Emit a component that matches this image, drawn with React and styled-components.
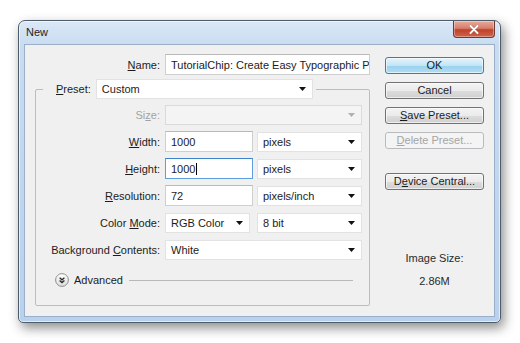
import React from 'react';
import styled, { createGlobalStyle } from 'styled-components';

const Global = createGlobalStyle`
  html, body { margin: 0; padding: 0; background: #ffffff; }
  body {
    font-family: "Liberation Sans", Arial, sans-serif;
    font-size: 11px;
    color: #1c1c1c;
  }
  * { box-sizing: border-box; }
`;

const Page = styled.div`
  width: 520px;
  height: 343px;
  padding: 20px 0 0 18px;
`;

const Window = styled.div`
  width: 483px;
  height: 303px;
  border: 1px solid #4d5b6a;
  border-radius: 7px 7px 5px 5px;
  background: linear-gradient(#dbe8f6 0px, #c9dcf0 24px, #b9d1ec 100%);
  box-shadow: 3px 5px 12px rgba(0, 0, 0, 0.45), inset 0 0 0 1px rgba(255, 255, 255, 0.6);
  display: flex;
  flex-direction: column;
  padding: 0 5px 5px 5px;
`;

const TitleBar = styled.div`
  height: 23px;
  display: flex;
  justify-content: space-between;
  align-items: flex-start;
`;

const Title = styled.div`
  padding-left: 2px;
  line-height: 23px;
  font-size: 11px;
  color: #1e1e1e;
`;

const CloseButton = styled.div`
  width: 42px;
  height: 17px;
  border: 1px solid #6b3a36;
  border-top: none;
  border-radius: 0 0 4px 4px;
  background: linear-gradient(#e9aa9c 0%, #d67f6c 45%, #c2412a 55%, #cd644a 100%);
  display: flex;
  align-items: center;
  justify-content: center;
  box-shadow: inset 0 0 0 1px rgba(255, 255, 255, 0.35);
`;

const Client = styled.div`
  flex: 1;
  background: #f0f0f0;
  border: 1px solid #9bb0c8;
  display: flex;
  padding: 9px 0 0 10px;
`;

const LeftCol = styled.div`
  width: 335px;
  display: flex;
  flex-direction: column;
`;

const NameRow = styled.div`
  display: grid;
  grid-template-columns: 125px 205px;
  column-gap: 5px;
  align-items: center;
`;

const Label = styled.div`
  text-align: right;
  white-space: nowrap;
  color: ${p => (p.$disabled ? '#a3a3a3' : '#1c1c1c')};
`;

const TextBox = styled.div`
  width: ${p => p.$w}px;
  height: 21px;
  background: #ffffff;
  border: 1px solid ${p => (p.$focus ? '#5c9ee0' : '#cfcfcf')};
  border-top-color: ${p => (p.$focus ? '#3d83cc' : '#b9b9b9')};
  padding-left: 5px;
  display: flex;
  align-items: center;
  white-space: nowrap;
  overflow: hidden;
`;

const Caret = styled.span`
  display: inline-block;
  width: 1px;
  height: 12px;
  background: #000;
  margin-left: 1px;
`;

const SelectBox = styled.div`
  width: ${p => p.$w}px;
  height: 20px;
  background: ${p => (p.$disabled ? '#f4f4f4' : '#ffffff')};
  border: 1px solid ${p => (p.$disabled ? '#dadada' : '#e2e2e2')};
  padding: 0 6px 0 5px;
  display: flex;
  align-items: center;
  justify-content: space-between;
  white-space: nowrap;
`;

const GroupBox = styled.fieldset`
  margin: 4px 0 0 0;
  width: 335px;
  height: 227px;
  border: 1px solid #bdbdbd;
  border-radius: 2px;
  padding: 5px 7px 0 0;
  min-width: 0;
`;

const Legend = styled.legend`
  margin-left: 7px;
  padding: 0 3px 0 13px;
  height: 20px;
  display: flex;
  align-items: center;
  gap: 5px;
`;

const FormGrid = styled.div`
  display: grid;
  grid-template-columns: 124px 197px;
  column-gap: 5px;
  row-gap: 6px;
  grid-auto-rows: 21px;
  align-items: center;
`;

const Controls = styled.div`
  display: flex;
  justify-content: space-between;
  align-items: center;
`;

const AdvancedRow = styled.div`
  grid-column: 1 / -1;
  margin-top: 7px;
  padding-left: 19px;
  display: flex;
  align-items: center;
  gap: 5px;
`;

const Rule = styled.div`
  flex: 1;
  height: 1px;
  background: #b8b8b8;
  margin: 1px 9px 0 1px;
`;

const RightCol = styled.div`
  width: 99px;
  margin-left: 15px;
  margin-top: 3px;
  display: flex;
  flex-direction: column;
  gap: 8px;
`;

const Button = styled.div`
  height: 17px;
  border: 1px solid ${p => (p.$default ? '#3d7bad' : p.$disabled ? '#b8bcbf' : '#727272')};
  border-radius: 3px;
  background: ${p =>
    p.$default
      ? 'linear-gradient(#e5f4fc 0%, #c4e5f6 50%, #98d1ef 51%, #b0ddf3 100%)'
      : p.$disabled
      ? '#f4f4f4'
      : 'linear-gradient(#f3f3f3 0%, #ebebeb 50%, #dddddd 51%, #d0d0d0 100%)'};
  box-shadow: ${p => (p.$disabled ? 'none' : 'inset 0 0 0 1px rgba(255,255,255,0.6)')};
  color: ${p => (p.$disabled ? '#a5a5a5' : '#1c1c1c')};
  display: flex;
  align-items: center;
  justify-content: center;
  margin-top: ${p => p.$gapTop || 0}px;
  line-height: 1;
`;

const Info = styled.div`
  margin-top: ${p => p.$top}px;
  text-align: center;
  line-height: 12px;
  color: #2a2a2a;
`;

const Arrow = ({ disabled }) => (
  <svg width="7" height="4" viewBox="0 0 7 4">
    <path d="M0 0 H7 L3.5 4 Z" fill={disabled ? '#b0b0b0' : '#111'} />
  </svg>
);

const Select = ({ w, children, disabled }) => (
  <SelectBox $w={w} $disabled={disabled}>
    <span>{children}</span>
    <Arrow disabled={disabled} />
  </SelectBox>
);

const AdvancedIcon = () => (
  <svg width="14" height="14" viewBox="0 0 14 14">
    <defs>
      <linearGradient id="advg" x1="0" y1="0" x2="0" y2="1">
        <stop offset="0" stopColor="#ffffff" />
        <stop offset="1" stopColor="#dcdcdc" />
      </linearGradient>
    </defs>
    <circle cx="7" cy="7" r="6.4" fill="url(#advg)" stroke="#8e8e8e" strokeWidth="1" />
    <path d="M4.6 4.8 L7 6.8 L9.4 4.8 M4.6 7.6 L7 9.6 L9.4 7.6" fill="none" stroke="#2b2b2b" strokeWidth="1.3" />
  </svg>
);

const CloseGlyph = () => (
  <svg width="10" height="9" viewBox="0 0 10 9">
    <path d="M1.5 1 L8.5 8 M8.5 1 L1.5 8" stroke="#5a2a22" strokeWidth="2.8" strokeLinecap="round" opacity="0.35" />
    <path d="M1.5 1 L8.5 8 M8.5 1 L1.5 8" stroke="#ffffff" strokeWidth="2" strokeLinecap="round" />
  </svg>
);

export default function App() {
  return (
    <>
      <Global />
      <Page>
        <Window>
          <TitleBar>
            <Title>New</Title>
            <CloseButton>
              <CloseGlyph />
            </CloseButton>
          </TitleBar>
          <Client>
            <LeftCol>
              <NameRow>
                <Label><u>N</u>ame:</Label>
                <TextBox $w={205}>TutorialChip: Create Easy Typographic P</TextBox>
              </NameRow>
              <GroupBox>
                <Legend>
                  <Label><u>P</u>reset:</Label>
                  <Select w={217}>Custom</Select>
                </Legend>
                <FormGrid>
                  <Label $disabled>Si<u>z</u>e:</Label>
                  <Select w={197} disabled>{'\u00a0'}</Select>

                  <Label><u>W</u>idth:</Label>
                  <Controls>
                    <TextBox $w={88}>1000</TextBox>
                    <Select w={105}>pixels</Select>
                  </Controls>

                  <Label><u>H</u>eight:</Label>
                  <Controls>
                    <TextBox $w={88} $focus>1000<Caret /></TextBox>
                    <Select w={105}>pixels</Select>
                  </Controls>

                  <Label><u>R</u>esolution:</Label>
                  <Controls>
                    <TextBox $w={88}>72</TextBox>
                    <Select w={105}>pixels/inch</Select>
                  </Controls>

                  <Label>Color <u>M</u>ode:</Label>
                  <Controls>
                    <Select w={85}>RGB Color</Select>
                    <Select w={105}>8 bit</Select>
                  </Controls>

                  <Label>Background <u>C</u>ontents:</Label>
                  <Select w={197}>White</Select>

                  <AdvancedRow>
                    <AdvancedIcon />
                    <span>Advanced</span>
                    <Rule />
                  </AdvancedRow>
                </FormGrid>
              </GroupBox>
            </LeftCol>
            <RightCol>
              <Button $default>OK</Button>
              <Button>Cancel</Button>
              <Button><span><u>S</u>ave Preset...</span></Button>
              <Button $disabled><span><u>D</u>elete Preset...</span></Button>
              <Button $gapTop={16}><span>D<u>e</u>vice Central...</span></Button>
              <Info $top={54}>Image Size:</Info>
              <Info $top={3}>2.86M</Info>
            </RightCol>
          </Client>
        </Window>
      </Page>
    </>
  );
}
